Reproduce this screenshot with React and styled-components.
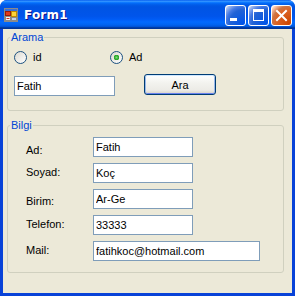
import React from "react";
import styled, { createGlobalStyle } from "styled-components";

const GlobalStyle = createGlobalStyle`
  html, body {
    margin: 0;
    padding: 0;
    background: #ffffff;
  }
  body {
    font-family: "Liberation Sans", Arial, sans-serif;
    font-size: 11px;
    color: #000;
  }
`;

const Window = styled.div`
  width: 295px;
  height: 296px;
  display: flex;
  flex-direction: column;
  background: #0842d8;
  border-radius: 7px 7px 0 0;
  overflow: hidden;
`;

const TitleBar = styled.div`
  height: 29px;
  flex: none;
  display: flex;
  align-items: center;
  padding: 0 3px 0 4px;
  background: linear-gradient(
    to bottom,
    #0058ee 0%,
    #3593ff 4%,
    #288eff 6%,
    #127dff 8%,
    #036ffc 10%,
    #0262ee 14%,
    #0057e5 20%,
    #0054e3 24%,
    #0055eb 56%,
    #005bf5 66%,
    #026afe 76%,
    #0062ef 86%,
    #0052d6 92%,
    #0040ab 94%,
    #003092 100%
  );
`;

const Title = styled.span`
  flex: 1;
  margin-left: 6px;
  font-family: "DejaVu Sans", Verdana, sans-serif;
  font-weight: bold;
  font-size: 12px;
  color: #ffffff;
  text-shadow: 1px 1px #0f1089;
  letter-spacing: 0.2px;
`;

const Controls = styled.div`
  display: flex;
  gap: 2px;
  margin-top: 1px;
`;

const CtrlButton = styled.div`
  width: 21px;
  height: 21px;
  box-sizing: border-box;
  border: 1px solid #ffffff;
  border-radius: 3px;
  display: flex;
  align-items: center;
  justify-content: center;
  background: ${(p) =>
    p.$close
      ? "radial-gradient(circle at 90% 90%, #cc4600 0%, #dc6527 55%, #cd7546 70%, #ffccb2 90%, #ffffff 100%)"
      : "radial-gradient(circle at 90% 90%, #0054e9 0%, #2263d5 55%, #4479e4 70%, #a3bbec 90%, #ffffff 100%)"};
`;

const Client = styled.div`
  flex: 1;
  margin: 0 3px 3px 3px;
  background: #ece9d8;
  padding: 2px 8px 0 4px;
`;

const GroupBox = styled.fieldset`
  margin: 0 0 ${(p) => p.$gapBelow || 0}px 0;
  padding: 0;
  min-width: 0;
  border: 1px solid #d0d0bf;
  border-radius: 3px;
`;

const Legend = styled.legend`
  margin-left: 2px;
  padding: 0 1px;
  line-height: 13px;
  font-size: 11px;
  color: #0046d5;
`;

const SearchBody = styled.div`
  padding: 7px 6px 14px 6px;
`;

const RadioRow = styled.div`
  display: flex;
  align-items: center;
  height: 13px;
`;

const RadioItem = styled.label`
  display: flex;
  align-items: center;
  gap: 6px;
  width: ${(p) => p.$width || "auto"};
  line-height: 13px;
`;

const RadioCircle = styled.span`
  width: 13px;
  height: 13px;
  box-sizing: border-box;
  border-radius: 50%;
  border: 1px solid #1c5180;
  background: ${(p) =>
    p.$checked
      ? "radial-gradient(circle at 50% 50%, #7ee07a 0, #3cb13a 1.6px, #21a121 2.6px, rgba(33,161,33,0) 3px), linear-gradient(135deg, #dcd9d0 0%, #ffffff 100%)"
      : "linear-gradient(135deg, #dcd9d0 0%, #ffffff 100%)"};
`;

const SearchRow = styled.div`
  display: flex;
  align-items: flex-start;
  margin-top: 10px;
  height: 22px;
`;

const TextBox = styled.input`
  width: ${(p) => p.$width}px;
  height: 20px;
  box-sizing: border-box;
  margin: ${(p) => p.$top || 0}px 0 0 0;
  border: 1px solid #7f9db9;
  background: #ffffff;
  padding: 0 2px;
  font-family: "Liberation Sans", Arial, sans-serif;
  font-size: 11px;
  color: #000;
  outline: none;
`;

const PushButton = styled.button`
  width: 72px;
  height: 21px;
  margin-left: 29px;
  box-sizing: border-box;
  border: 1px solid #003c74;
  border-radius: 3px;
  padding: 0;
  font-family: "Liberation Sans", Arial, sans-serif;
  font-size: 11px;
  color: #000;
  background: linear-gradient(to bottom, #ffffff 0%, #f3f3ef 40%, #ecebe6 80%, #d6d0c5 100%);
  box-shadow: inset 0 1px 0 #cee7ff, inset 1px 0 0 #98b8ea, inset -1px 0 0 #98b8ea,
    inset 0 -1px 0 #6982ee;
`;

const InfoGrid = styled.div`
  display: grid;
  grid-template-columns: 67px auto;
  row-gap: 6px;
  padding: 5px 6px 11px 18px;
`;

const FieldLabel = styled.span`
  padding-top: ${(p) => p.$offset}px;
  line-height: 13px;
`;

const FormIcon = () => (
  <svg width="14" height="14" viewBox="0 0 14 14">
    <rect x="0.5" y="0.5" width="13" height="13" fill="#e8e8e8" stroke="#8a8a8a" />
    <rect x="1" y="1" width="12" height="2" fill="#3a6fd8" />
    <rect x="1.5" y="3.5" width="5" height="4" fill="#e03a1c" stroke="#9b1a08" strokeWidth="1" />
    <rect x="7.5" y="3.5" width="5" height="5" fill="#ffd23a" stroke="#c08a00" strokeWidth="1" />
    <rect x="1.5" y="8.5" width="5" height="4" fill="#f4f4f4" stroke="#8a8a8a" strokeWidth="1" />
    <rect x="2.5" y="10" width="3" height="1" fill="#d83020" />
    <rect x="7.5" y="9.5" width="5" height="3" fill="#c8d4ec" stroke="#8a8a8a" strokeWidth="1" />
  </svg>
);

const MinIcon = () => (
  <svg width="19" height="19" viewBox="0 0 19 19">
    <rect x="4" y="12" width="7" height="3" fill="#ffffff" />
  </svg>
);

const MaxIcon = () => (
  <svg width="19" height="19" viewBox="0 0 19 19">
    <rect x="4" y="3" width="11" height="3" fill="#ffffff" />
    <rect x="4.5" y="3.5" width="10" height="11" fill="none" stroke="#ffffff" strokeWidth="1" />
  </svg>
);

const CloseIcon = () => (
  <svg width="19" height="19" viewBox="0 0 19 19">
    <path d="M5 5 L14 14 M14 5 L5 14" stroke="#ffffff" strokeWidth="2" strokeLinecap="square" />
  </svg>
);

const fields = [
  { label: "Ad:", value: "Fatih", width: 100, offset: 7 },
  { label: "Soyad:", value: "Koç", width: 100, offset: 3 },
  { label: "Birim:", value: "Ar-Ge", width: 100, offset: 6 },
  { label: "Telefon:", value: "33333", width: 100, offset: 3 },
  { label: "Mail:", value: "fatihkoc@hotmail.com", width: 167, offset: 3 },
];

const App = () => {
  return (
    <>
      <GlobalStyle />
      <Window>
        <TitleBar>
          <FormIcon />
          <Title>Form1</Title>
          <Controls>
            <CtrlButton>
              <MinIcon />
            </CtrlButton>
            <CtrlButton>
              <MaxIcon />
            </CtrlButton>
            <CtrlButton $close>
              <CloseIcon />
            </CtrlButton>
          </Controls>
        </TitleBar>
        <Client>
          <GroupBox $gapBelow={8}>
            <Legend>Arama</Legend>
            <SearchBody>
              <RadioRow>
                <RadioItem $width="96px">
                  <RadioCircle />
                  id
                </RadioItem>
                <RadioItem>
                  <RadioCircle $checked />
                  Ad
                </RadioItem>
              </RadioRow>
              <SearchRow>
                <TextBox $width={101} $top={2} defaultValue="Fatih" />
                <PushButton>Ara</PushButton>
              </SearchRow>
            </SearchBody>
          </GroupBox>
          <GroupBox>
            <Legend>Bilgi</Legend>
            <InfoGrid>
              {fields.map((f) => (
                <React.Fragment key={f.label}>
                  <FieldLabel $offset={f.offset}>{f.label}</FieldLabel>
                  <TextBox $width={f.width} defaultValue={f.value} />
                </React.Fragment>
              ))}
            </InfoGrid>
          </GroupBox>
        </Client>
      </Window>
    </>
  );
};

export default App;
